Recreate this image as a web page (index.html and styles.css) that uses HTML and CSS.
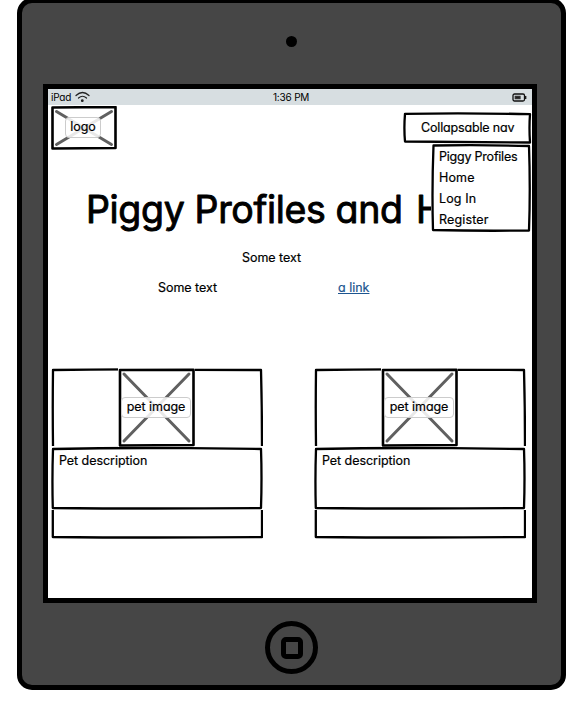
FILE: index.html
```html
<!DOCTYPE html>
<html lang="en">
<head>
<meta charset="utf-8">
<title>Piggy Profiles</title>
<link rel="stylesheet" href="styles.css">
</head>
<body>
<div class="tablet">
  <div class="camera"></div>
  <main class="screen">
    <div class="status">
      <span class="carrier">iPad
        <svg width="15" height="12" viewBox="0 0 15 12" fill="none" stroke="#222" stroke-width="1.2" stroke-linecap="round"><path d="M1 4.500Q7.500-1.500 14 4.500M3.500 7Q7.500 3.500 11.500 7"/><circle cx="7.300" cy="9.700" r=".8" fill="#222"/></svg>
      </span>
      <span class="clock">1:36 PM</span>
      <svg class="battery" width="15" height="9" viewBox="0 0 15 9" fill="none" stroke="#111" stroke-width="1.300"><rect x="1" y="1" width="11.500" height="7" rx="1.500"/><path d="M13.700 3v3"/><path d="M3.300 3.300h4.700v2.400H3.300z" fill="#222" stroke="#333"/></svg>
    </div>
    <header class="top">
      <div class="logo">
        <svg class="frame" viewBox="0 0 66 44"><path class="cross" d="M5.500 5.500l55 33M60.500 5.500l-55 33"/><path class="thick" d="M1.500 1.500L64.500 1V42L1.500 42.500z"/></svg>
        <span class="tag logo-tag">logo</span>
      </div>
      <nav class="nav">
        <div class="nav-button">
          <svg class="frame" viewBox="0 0 130 32"><path class="ink" d="M2 1.800Q66 .8 127 2.200Q126 16 127 30.500Q60 30 2 29.500Q.8 16 2 1.800z"/></svg>
          <span class="nav-label tight">Collapsable nav</span>
        </div>
        <ul class="menu">
          <li class="menu-frame"><svg class="frame" viewBox="0 0 100 88"><path class="ink" d="M2.500 1.500Q50 .7 98 2Q99.500 45 98 86.500Q50 87.200 2 86Q.8 45 2.500 1.500z"/></svg></li>
          <li><span class="tight">Piggy Profiles</span></li>
          <li><span>Home</span></li>
          <li><span>Log In</span></li>
          <li><span>Register</span></li>
        </ul>
      </nav>
    </header>
    <h1 class="title"><svg class="title-art" width="400" height="54" viewBox="0 0 400 54"><text class="headline" x="38" y="34.500" textLength="317">Piggy Profiles and</text><text class="headline" x="368" y="34.500">H</text></svg></h1>
    <p class="intro"><span class="some">Some text</span></p>
    <p class="detail"><span class="some">Some text</span><a class="link">a link</a></p>
    <section class="cards">
      <article class="card">
        <svg class="frame" viewBox="0 0 212 172"><path class="ink" d="M2 78Q1.500 40 2 2Q70 1 138 1.800L210 2Q211 40 211 78M2 81Q70 79.500 138 80.200L210 81Q211 110 210 140Q100 141 1.800 140Q1 110 2 81zM1.800 142V169Q100 170 211 169V142"/></svg>
        <div class="photo-row">
          <div class="photo">
            <svg class="frame" viewBox="0 0 77 79"><path class="cross" d="M6 6l65 67M71 6L6 73"/><path class="thick" d="M2 2L75.500 1.700V77L2 77.500z"/></svg>
            <span class="tag pet-tag">pet image</span>
          </div>
        </div>
        <p class="description">Pet description</p>
      </article>
      <article class="card">
        <svg class="frame" viewBox="0 0 212 172"><path class="ink" d="M2 78Q1.500 40 2 2Q70 1 138 1.800L210 2Q211 40 211 78M2 81Q70 79.500 138 80.200L210 81Q211 110 210 140Q100 141 1.800 140Q1 110 2 81zM1.800 142V169Q100 170 211 169V142"/></svg>
        <div class="photo-row">
          <div class="photo">
            <svg class="frame" viewBox="0 0 77 79"><path class="cross" d="M6 6l65 67M71 6L6 73"/><path class="thick" d="M2 2L75.500 1.700V77L2 77.500z"/></svg>
            <span class="tag pet-tag">pet image</span>
          </div>
        </div>
        <p class="description">Pet description</p>
      </article>
    </section>
  </main>
  <div class="home"><div class="home-square"></div></div>
</div>
</body>
</html>
```
FILE: styles.css
```css
* { box-sizing: border-box; }
body {
  margin: 0;
  height: 707px;
  overflow: hidden;
  background: #fff;
  color: #000;
  font: 400 12.5px/20px Inter, Roboto, sans-serif;
  font-feature-settings: "cv11" 1;
  -webkit-text-stroke: .2px;
  white-space: nowrap;
}
p, h1, ul { margin: 0; padding: 0; }
svg { display: block; }
.tablet {
  width: 549px;
  height: 692px;
  margin: -2px 0 0 17px;
  padding: 33px 21px 0;
  border: 5px solid #000;
  border-radius: 15px;
  background: #464646;
  display: flex;
  flex-direction: column;
}
.camera { width: 11px; height: 11px; flex: none; margin: 0 0 37px 243px; border-radius: 50%; background: #000; }
.screen { width: 494px; height: 519px; flex: none; border: 5px solid #000; background: #fff; }
.status {
  height: 16px;
  padding: 0 5px 0 3px;
  display: grid;
  grid-template-columns: 222px 1fr auto;
  align-items: center;
  background: #d7dee1;
  font-size: 10px;
  line-height: 15px;
  letter-spacing: -.2px;
  -webkit-text-stroke: 0;
}
.carrier { display: flex; gap: 4px; align-items: center; }
.top { height: 83px; padding: 1px 0 0 3px; display: flex; justify-content: space-between; }
.frame { position: absolute; inset: 0; width: 100%; height: 100%; fill: none; stroke: #000; stroke-linejoin: round; }
.ink { stroke-width: 2.3; }
.thick { stroke-width: 2.6; }
.cross { stroke: #606060; stroke-width: 3; stroke-linecap: round; }
.logo { position: relative; width: 66px; height: 44px; display: flex; align-items: center; justify-content: center; padding: 0 2px 1px 0; }
.tag { position: relative; border: 1px solid #ccc; border-radius: 4px; background: rgba(255,255,255,.86); text-align: center; height: 21px; line-height: 18px; }
.logo-tag { width: 36px; }
.pet-tag { width: 70px; letter-spacing: -.05px; }
.nav { width: 130px; padding-top: 6px; margin-right: -1px; position: relative; z-index: 1; }
.nav-button { position: relative; height: 32px; padding: 6px 0 0 18px; }
.menu { position: relative; list-style: none; width: 100px; height: 88px; margin-left: 28px; padding: 2px 0 0 8px; background: #fff; line-height: 21px; }
.nav-label, .menu span { position: relative; }
.menu span { letter-spacing: .15px; }
.nav-label.tight { letter-spacing: -.16px; }
.menu .tight { letter-spacing: -.22px; }
.title { height: 54px; }
.title-art { overflow: visible; }
.headline { font-size: 37.5px; font-weight: 400; -webkit-text-stroke: 0; stroke: #000; stroke-width: .9px; stroke-linejoin: round; }
.intro { height: 30px; padding: 6px 0 0 194px; }
.detail { height: 30px; padding: 6px 0 0 110px; display: flex; }
.some { width: 59px; letter-spacing: -.05px; }
.link { margin-left: 121px; color: #1c5590; text-decoration: underline; }
.cards { padding: 66px 0 0 3px; display: grid; grid-template-columns: 212px 212px; column-gap: 51px; }
.card { position: relative; height: 172px; }
.photo-row { height: 79px; padding-left: 67px; }
.photo { position: relative; width: 77px; height: 79px; padding: 29px 0 0 3px; background: #fff; }
.photo .tag { display: block; }
.description { position: relative; padding: 4px 8px; letter-spacing: -.05px; }
.home { width: 53px; height: 53px; margin: 18px 0 0 222px; border: 5px solid #000; border-radius: 50%; display: grid; place-items: center; }
.home-square { width: 22px; height: 22px; border: 5px solid #000; border-radius: 5px; }
```
